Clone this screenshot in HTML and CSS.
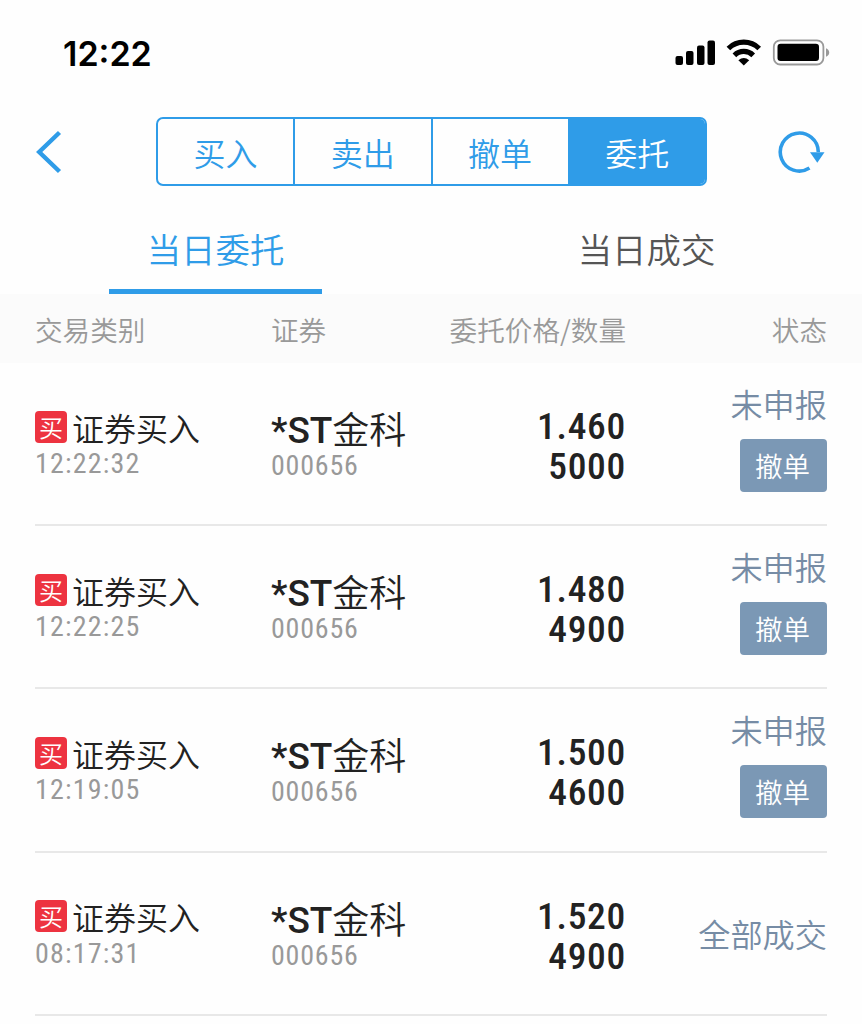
FILE: index.html
```
<!DOCTYPE html>
<html lang="zh-CN">
<head>
  <meta charset="UTF-8">
  <meta name="viewport" content="width=device-width, initial-scale=1.0">
  <title>当日委托</title>
  <link rel="stylesheet" href="styles.css">
</head>
<body>
  <div class="status-bar">
    <span class="clock">12:22</span>
    <svg class="status-icons" width="156" height="28" viewBox="0 0 156 28">
      <rect x="0.500" y="17" width="7.500" height="9" rx="2"/>
      <rect x="11" y="12" width="7.500" height="14" rx="2"/>
      <rect x="22" y="6.500" width="7.500" height="19.500" rx="2"/>
      <rect x="32.500" y="1.500" width="7.500" height="24.500" rx="2"/>
      <g fill="none" stroke="#000" stroke-width="5.2">
        <path d="M53.400 9.500a22 22 0 0 1 30.800 0"/>
        <path d="M59.400 16.300a13.400 13.400 0 0 1 18.800 0"/>
      </g>
      <path d="M63.400 21.200Q68.800 17 74.200 21.200L68.800 26.500Z"/>
      <rect x="98.800" y="1.300" width="49.600" height="24.200" rx="6.500" fill="none" stroke="#999" stroke-width="1.800"/>
      <rect x="102.500" y="4.700" width="41.500" height="17.300" rx="3.200"/>
      <path d="M151 9.200q3.200 1.300 3.200 4.300t-3.200 4.300z" fill="#999"/>
    </svg>
  </div>

  <div class="nav">
    <svg class="back" width="26" height="44" viewBox="0 0 26 44">
      <path d="M23.500 2.500L3.200 22L23.500 41.500" fill="none" stroke="#2f9ce8" stroke-width="4.400"/>
    </svg>
    <div class="segment">
      <a>买入</a>
      <a>卖出</a>
      <a>撤单</a>
      <a class="active">委托</a>
    </div>
    <svg class="refresh" width="48" height="44" viewBox="0 0 48 44">
      <path d="M31.500 38.100A19 19 0 1 1 40.300 22" fill="none" stroke="#2f9ce8" stroke-width="3.600"/>
      <path d="M32 22.200H46.500L39.300 32.800Z" fill="#2f9ce8"/>
    </svg>
  </div>

  <div class="tabs">
    <div class="tab"><span class="current">当日委托</span></div>
    <div class="tab"><span>当日成交</span></div>
  </div>

  <div class="grid table-head">
    <span>交易类别</span>
    <span>证券</span>
    <span class="right">委托价格/数量</span>
    <span class="right">状态</span>
  </div>

  <div class="list">
    <div class="grid row">
      <div class="type">
        <div class="type-name"><i class="badge">买</i>证券买入</div>
        <div class="sub time">12:22:32</div>
      </div>
      <div class="stock">
        <div class="stock-name"><b>*ST</b>金科</div>
        <div class="sub">000656</div>
      </div>
      <div class="price">1.460<br>5000</div>
      <div class="state">未申报<button>撤单</button></div>
    </div>
    <div class="grid row">
      <div class="type">
        <div class="type-name"><i class="badge">买</i>证券买入</div>
        <div class="sub time">12:22:25</div>
      </div>
      <div class="stock">
        <div class="stock-name"><b>*ST</b>金科</div>
        <div class="sub">000656</div>
      </div>
      <div class="price">1.480<br>4900</div>
      <div class="state">未申报<button>撤单</button></div>
    </div>
    <div class="grid row">
      <div class="type">
        <div class="type-name"><i class="badge">买</i>证券买入</div>
        <div class="sub time">12:19:05</div>
      </div>
      <div class="stock">
        <div class="stock-name"><b>*ST</b>金科</div>
        <div class="sub">000656</div>
      </div>
      <div class="price">1.500<br>4600</div>
      <div class="state">未申报<button>撤单</button></div>
    </div>
    <div class="grid row">
      <div class="type">
        <div class="type-name"><i class="badge">买</i>证券买入</div>
        <div class="sub time">08:17:31</div>
      </div>
      <div class="stock">
        <div class="stock-name"><b>*ST</b>金科</div>
        <div class="sub">000656</div>
      </div>
      <div class="price">1.520<br>4900</div>
      <div class="state done">全部成交</div>
    </div>
  </div>
</body>
</html>
```
FILE: styles.css
```
* {
  box-sizing: border-box;
}
body {
  margin: 0;
  height: 1024px;
  overflow: hidden;
  background: #fefefe;
  color: #222;
  font-family: 'Noto Sans CJK SC', sans-serif;
  font-weight: 350;
}
.status-bar {
  display: flex;
  justify-content: space-between;
  align-items: center;
  height: 106px;
  padding: 0 31px 0 63px;
}
.clock {
  font-family: Inter, sans-serif;
  font-size: 34px;
  font-weight: 600;
  color: #000;
}
.nav {
  display: flex;
  align-items: center;
  height: 92px;
  padding: 0 37px 0 36px;
}
.segment {
  display: flex;
  width: 551px;
  height: 69px;
  margin: 0 71px 1px 94px;
  flex: none;
  border: 2px solid #2f9ce8;
  border-radius: 7px;
  overflow: hidden;
}
.segment a {
  flex: 1;
  color: #2f9ce8;
  font-size: 32px;
  line-height: 66px;
  text-align: center;
}
.segment a + a {
  border-left: 2px solid #2f9ce8;
}
.segment .active {
  background: #2f9ce8;
  color: #fff;
}
.back,
.refresh {
  flex: none;
}
.tabs {
  display: flex;
  height: 96px;
}
.tab {
  flex: 1;
  display: flex;
  justify-content: center;
}
.tab span {
  width: 213px;
  color: #555;
  font-size: 34.4px;
  line-height: 101px;
  text-align: center;
}
.tab .current {
  height: 96px;
  color: #2f9ce8;
  border-bottom: 5px solid #2f9ce8;
}
.grid {
  display: grid;
  grid-template-columns: 236px 155px 200px 201px;
}
.table-head {
  height: 69px;
  padding: 0 35px;
  background: #fbfbfb;
  color: #999;
  font-size: 27.6px;
  line-height: 70px;
}
.right {
  text-align: right;
}
.list {
  padding: 0 35px;
}
.row {
  height: 163.2px;
  border-bottom: 2px solid #e8e8e8;
}
.type {
  padding-top: 43px;
}
.type-name {
  display: flex;
  align-items: center;
  height: 41px;
  font-size: 32px;
  line-height: 38px;
}
.badge {
  width: 32px;
  height: 32px;
  margin-right: 5px;
  border-radius: 4px;
  background: #ed3340;
  color: #fff;
  font-size: 24px;
  font-style: normal;
  line-height: 31px;
  text-align: center;
}
.sub {
  color: #999;
  font-family: Roboto, sans-serif;
  font-size: 28px;
  font-weight: 450;
  font-stretch: 85%;
  letter-spacing: 0.8px;
  line-height: 32px;
}
.time {
  padding-top: 1px;
  letter-spacing: 1.2px;
}
.stock {
  padding-top: 45px;
}
.stock-name {
  height: 42px;
  font-size: 37px;
  line-height: 40px;
}
.stock-name b {
  font-family: Roboto, sans-serif;
  font-weight: 500;
  line-height: 1;
  vertical-align: 1px;
}
.price {
  padding-top: 43px;
  font-family: Roboto, sans-serif;
  font-size: 37.5px;
  font-weight: 500;
  font-stretch: 85%;
  letter-spacing: 0.7px;
  line-height: 40px;
  text-align: right;
}
.state {
  display: flex;
  flex-direction: column;
  align-items: flex-end;
  padding-top: 20px;
  color: #768ca5;
  font-size: 32.2px;
  line-height: 40px;
}
.state button {
  width: 87px;
  height: 53px;
  margin-top: 16px;
  padding: 0 2px 2px 0;
  border: none;
  border-radius: 4px;
  background: #7b98b5;
  color: #fff;
  font: inherit;
  font-size: 27.5px;
}
.done {
  padding-top: 60px;
}
```
